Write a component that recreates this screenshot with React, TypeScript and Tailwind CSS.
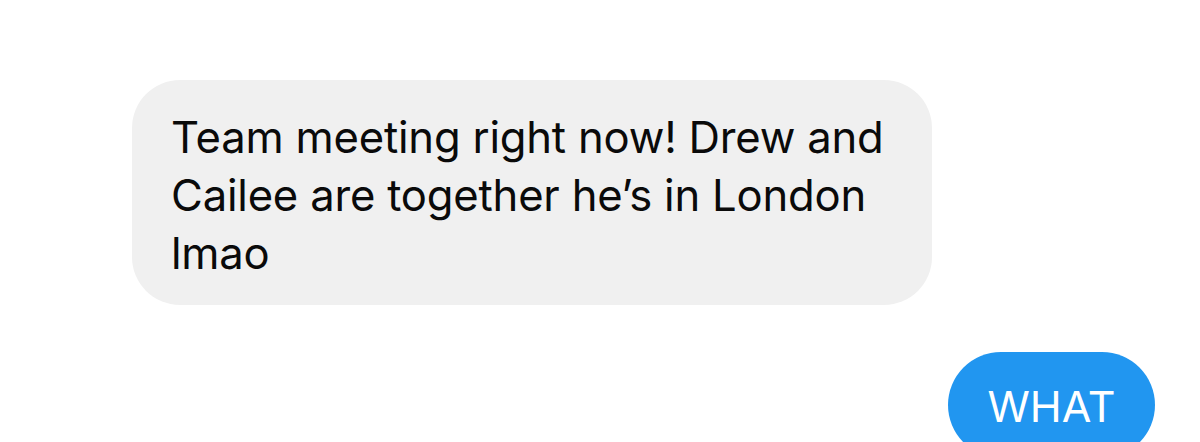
export default function App() {
  return (
    <div className="w-[1200px] h-[442px] overflow-hidden bg-white flex flex-col font-['Inter','Liberation_Sans',sans-serif]">
      {/* incoming message */}
      <div className="shrink-0 ml-[132px] mt-[80px] w-[800px] h-[225px] rounded-[48px] bg-[#f0f0f0] pl-[39px] pr-[20px] pt-[29px]">
        <p className="text-[43.6px] leading-[58px] text-[#0a0a0a] tracking-[-0.2px]">
          Team meeting right now! Drew and
          <br />
          Cailee are together he’s in London
          <br />
          lmao
        </p>
      </div>

      {/* outgoing message */}
      <div className="shrink-0 self-end mr-[45px] mt-[47px] w-[207px] h-[106px] rounded-full bg-[#2196f0] flex justify-center pt-[27px]">
        <span className="text-[43px] leading-[54px] text-white">WHAT</span>
      </div>
    </div>
  )
}
